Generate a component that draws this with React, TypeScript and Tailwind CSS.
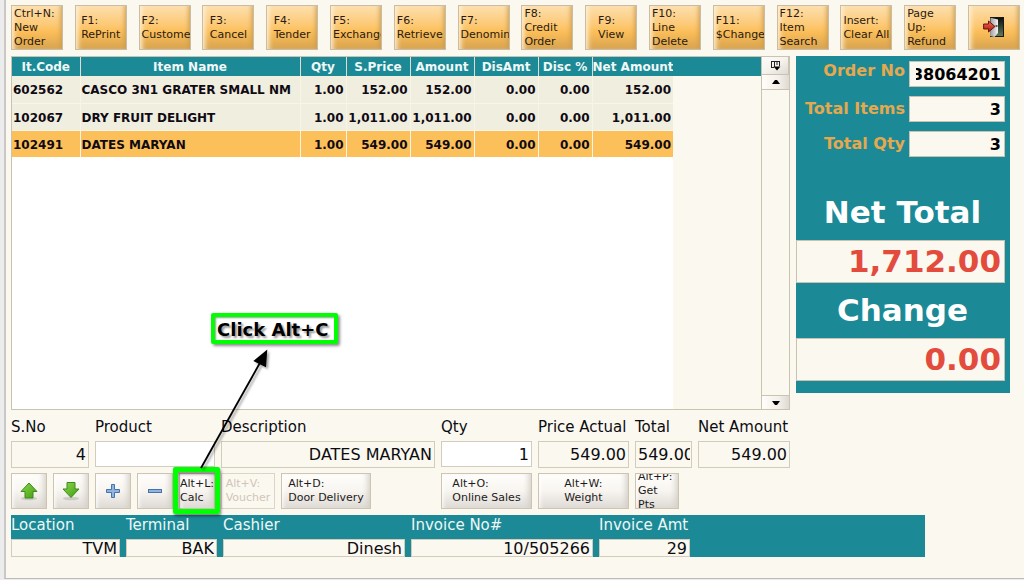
import React from "react";
import clsx from "clsx";

const orangeButton =
  "h-[45px] w-[52px] flex items-center justify-center overflow-hidden border border-[#c9bda6] px-0.5 text-[11px] leading-[14px] text-[#2b1a10] bg-[linear-gradient(to_bottom,#fddfae,#fcc873_45%,#fbbe59_60%,#d8a450)] shadow-[inset_5px_0_5px_-3px_#fff0d4,inset_-5px_0_5px_-4px_#c99a4c]";

const grayButton =
  "h-9 flex items-center justify-center overflow-hidden border border-[#cdc4b2] text-[11px] leading-[14px] text-[#1d1a20] bg-[linear-gradient(to_bottom,#fffefc,#f8f5f0_50%,#dedad5)] shadow-[inset_4px_0_4px_-3px_#ffffff,inset_-6px_0_6px_-4px_#d2cdc6]";

const functionKeys: string[][] = [
  ["Ctrl+N:", "New", "Order"],
  ["F1:", "RePrint"],
  ["F2:", "Customer"],
  ["F3:", "Cancel"],
  ["F4:", "Tender"],
  ["F5:", "Exchange"],
  ["F6:", "Retrieve"],
  ["F7:", "Denomin"],
  ["F8:", "Credit", "Order"],
  ["F9:", "View"],
  ["F10:", "Line", "Delete"],
  ["F11:", "$Change"],
  ["F12:", "Item", "Search"],
  ["Insert:", "Clear All"],
  ["Page", "Up:", "Refund"],
];

const columns = [
  { title: "It.Code", width: "w-[68px]" },
  { title: "Item Name", width: "w-[220px]" },
  { title: "Qty", width: "w-[46px]" },
  { title: "S.Price", width: "w-[64px]" },
  { title: "Amount", width: "w-[64px]" },
  { title: "DisAmt", width: "w-[64px]" },
  { title: "Disc %", width: "w-[54px]" },
  { title: "Net Amount", width: "w-[81px]" },
];

const items = [
  ["602562", "CASCO 3N1 GRATER SMALL NM", "1.00", "152.00", "152.00", "0.00", "0.00", "152.00"],
  ["102067", "DRY FRUIT DELIGHT", "1.00", "1,011.00", "1,011.00", "0.00", "0.00", "1,011.00"],
  ["102491", "DATES MARYAN", "1.00", "549.00", "549.00", "0.00", "0.00", "549.00"],
];

function Lines({ lines }: { lines: string[] }) {
  return (
    <span className={clsx("block max-w-full text-left whitespace-nowrap", lines.length > 2 && "w-full")}>
      {lines.map((line) => (
        <span key={line} className="block">
          {line}
        </span>
      ))}
    </span>
  );
}

function ExitIcon() {
  return (
    <svg width="22" height="22" viewBox="0 0 22 22" aria-hidden="true">
      <defs>
        <linearGradient id="doorway" x1="0" y1="0" x2="0" y2="1">
          <stop offset="0" stopColor="#0d0f0d" />
          <stop offset="1" stopColor="#5d7a5c" />
        </linearGradient>
        <linearGradient id="door" x1="0" y1="0" x2="1" y2="0">
          <stop offset="0" stopColor="#9a9a9a" />
          <stop offset="1" stopColor="#f4f4f4" />
        </linearGradient>
        <linearGradient id="exitArrow" x1="0" y1="0" x2="0" y2="1">
          <stop offset="0" stopColor="#f0705c" />
          <stop offset="1" stopColor="#b01208" />
        </linearGradient>
      </defs>
      <rect x="7" y="0" width="14" height="20" fill="#151815" />
      <rect x="8" y="1" width="12" height="18" fill="url(#doorway)" />
      <path d="M7.5 .8 L15 2.5 V16 L11.5 20 L7 19 Z" fill="url(#door)" />
      <path d="M12.5 9 h2" stroke="#222" strokeWidth="1.4" />
      <path d="M.6 7 H5.5 V4 L12 9.5 L5.5 15 V12 H.6 Z" fill="url(#exitArrow)" stroke="#5a0a05" strokeWidth=".9" />
    </svg>
  );
}

function GreenArrow({ down = false }: { down?: boolean }) {
  return (
    <svg width="18" height="20" viewBox="0 0 18 20" aria-hidden="true">
      <defs>
        <linearGradient id={down ? "greenDown" : "greenUp"} x1="0" y1="0" x2="1" y2="1">
          <stop offset="0" stopColor="#8fd850" />
          <stop offset="1" stopColor="#3f9c0c" />
        </linearGradient>
      </defs>
      <ellipse cx="9" cy="17.5" rx="8" ry="1.8" fill="#000" opacity=".13" />
      {down ? (
        <path d="M5 1.5 H13 V8 H17 L9 16.5 L1 8 H5 Z" fill="url(#greenDown)" stroke="#3d8a1c" strokeLinejoin="round" />
      ) : (
        <path d="M9 2 L17 10.5 H13 V17 H5 V10.5 H1 Z" fill="url(#greenUp)" stroke="#3d8a1c" strokeLinejoin="round" />
      )}
    </svg>
  );
}

function FieldBox({
  id,
  value,
  editable = false,
  className,
}: {
  id: string;
  value: string;
  editable?: boolean;
  className?: string;
}) {
  return (
    <input
      id={id}
      defaultValue={value}
      readOnly={!editable}
      className={clsx(
        "block w-full min-w-0 rounded-none border border-[#d3cbbb] text-right text-[16px] text-[#0c0c10] outline-none",
        editable ? "h-[26px] bg-white" : "h-[27px] bg-[#fbf8f0]",
        className ?? "px-0.5",
      )}
    />
  );
}

function SideField({ id, label, value, first = false }: { id: string; label: string; value: string; first?: boolean }) {
  return (
    <div className="flex items-center gap-1">
      <label
        htmlFor={id}
        className={clsx("flex-1 text-right text-[16px] leading-5 font-bold whitespace-nowrap text-[#e5a84f]", first && "self-start")}
      >
        {label}
      </label>
      <input
        id={id}
        readOnly
        dir="rtl"
        defaultValue={value}
        className="h-[26px] w-24 border border-[#c9c2b2] bg-[#fbf8f0] pr-[3px] pl-1.5 text-right text-[16px] font-bold text-black outline-none"
      />
    </div>
  );
}

const labelClass = "flex h-[31px] items-center pt-[3px] text-[15px] whitespace-nowrap text-[#0c0c10]";

const statusFields = [
  { id: "location", label: "Location", value: "TVM", width: "w-[109px]" },
  { id: "terminal", label: "Terminal", value: "BAK", width: "w-[91px]" },
  { id: "cashier", label: "Cashier", value: "Dinesh", width: "w-[182px]" },
  { id: "invoice-no", label: "Invoice No#", value: "10/505266", width: "w-[182px]" },
  { id: "invoice-amt", label: "Invoice Amt", value: "29", width: "w-[91px]" },
];

export default function App() {
  return (
    <div className="flex min-h-screen flex-col bg-[#ececec] pb-px pl-1 font-['DejaVu_Sans',sans-serif]">
      <div className="flex flex-1 flex-col border-b border-l-2 border-b-[#bdbbb8] border-l-[#c9c8c6] bg-[#fbf8f0] pb-[21px] pl-[5px]">
        <nav className="flex justify-between pt-[5px] pr-1">
          {functionKeys.map((lines) => (
            <button key={lines.join(" ")} type="button" className={orangeButton}>
              <Lines lines={lines} />
            </button>
          ))}
          <button type="button" aria-label="Exit" className={orangeButton}>
            <ExitIcon />
          </button>
        </nav>

        <main className="flex flex-1 items-stretch gap-1.5 pt-1.5 pr-3.5">
          <section className="flex min-w-0 flex-1 flex-col">
            <div className="flex flex-1 border border-[#cbc3b1]">
              <div className="w-[661px] shrink-0 bg-white">
                <table className="w-full table-fixed border-collapse text-[12px] font-bold">
                  <thead>
                    <tr className="h-[19px] bg-[#1b8a96] text-[#f0f8f6]">
                      {columns.map((column, index) => (
                        <th
                          key={column.title}
                          className={clsx(
                            column.width,
                            "p-0 text-center leading-[18px] whitespace-nowrap",
                            index > 0 && "border-l border-[#e4ddcd]",
                          )}
                        >
                          {column.title}
                        </th>
                      ))}
                    </tr>
                  </thead>
                  <tbody>
                    {items.map((row, rowIndex) => (
                      <tr
                        key={row[0]}
                        className={clsx("h-[27px] text-[#100a14]", rowIndex === 2 ? "bg-[#fcc05a]" : "border-b border-[#f8f5ea] bg-[#f0eedf]")}
                      >
                        {row.map((cell, index) => (
                          <td
                            key={index}
                            className={clsx(
                              "overflow-hidden p-0 pt-0.5 whitespace-nowrap",
                              index < 2 ? "pl-px text-left" : "pr-0.5 text-right",
                              index > 0 && "border-l border-[#f9f4e6]",
                            )}
                          >
                            {cell}
                          </td>
                        ))}
                      </tr>
                    ))}
                  </tbody>
                </table>
              </div>
              <div className="min-w-0 flex-1">
                <div className="h-[19px] bg-[#1b8a96]" />
              </div>
              <div className="flex w-7 flex-col border-l border-[#cbc3b1]">
                <button
                  type="button"
                  aria-label="Choose columns"
                  className="flex h-[18px] items-center justify-center border-r border-b border-[#cbc3b1] bg-[linear-gradient(to_bottom_right,#fffdfa,#f6f2ec_50%,#dedad3)]"
                >
                  <svg width="11" height="11" viewBox="0 0 11 11" aria-hidden="true">
                    <path d="M1.5 8 V1.5 H9.5 V6 M1 1.5 H10 M4.5 1.5 V7 M7 1.5 V5 M1 7.5 H4" fill="none" stroke="#222" />
                    <path d="M3.5 6.5 H10.5 L7 10.5 Z" fill="#000" />
                  </svg>
                </button>
                <button
                  type="button"
                  aria-label="Scroll up"
                  className="flex h-[15px] items-center justify-center border-b border-[#cbc3b1] bg-[linear-gradient(to_right,#fffdfa,#f4f0ea_60%,#dedad3)]"
                >
                  <svg width="8" height="4" viewBox="0 0 8 4" aria-hidden="true">
                    <path d="M0 4 L3 0 H5 L8 4 Z" fill="#000" />
                  </svg>
                </button>
                <div className="flex-1" />
                <button
                  type="button"
                  aria-label="Scroll down"
                  className="flex h-[14px] items-center justify-center border-t border-[#cbc3b1] bg-[linear-gradient(to_right,#fffdfa,#f4f0ea_60%,#dedad3)]"
                >
                  <svg width="8" height="4" viewBox="0 0 8 4" aria-hidden="true">
                    <path d="M0 0 H8 L5 4 H3 Z" fill="#000" />
                  </svg>
                </button>
              </div>
            </div>

            <form className="grid grid-cols-[78px_120px_minmax(0,1fr)_91px_91px_57px_92px] gap-x-1.5">
              <label htmlFor="sno" className={labelClass}>S.No</label>
              <label htmlFor="product" className={labelClass}>Product</label>
              <label htmlFor="description" className={labelClass}>Description</label>
              <label htmlFor="qty" className={labelClass}>Qty</label>
              <label htmlFor="price" className={labelClass}>Price Actual</label>
              <label htmlFor="total" className={labelClass}>Total</label>
              <label htmlFor="net" className={labelClass}>Net Amount</label>

              <FieldBox id="sno" value="4" />
              <FieldBox id="product" value="" editable />
              <FieldBox id="description" value="DATES MARYAN" />
              <FieldBox id="qty" value="1" editable />
              <FieldBox id="price" value="549.00" />
              <FieldBox id="total" value="549.00" className="pr-px pl-0.5" />
              <FieldBox id="net" value="549.00" />

              <div className="flex gap-1.5 pt-[5px]">
                <button type="button" aria-label="Move up" className={clsx(grayButton, "w-9")}>
                  <GreenArrow />
                </button>
                <button type="button" aria-label="Move down" className={clsx(grayButton, "w-9")}>
                  <GreenArrow down />
                </button>
              </div>
              <div className="flex gap-1.5 pt-[5px]">
                <button type="button" aria-label="Add" className={clsx(grayButton, "w-9")}>
                  <svg width="14" height="14" viewBox="0 0 14 14" aria-hidden="true">
                    <path d="M5.5 .5 H8.5 V5.5 H13.5 V8.5 H8.5 V13.5 H5.5 V8.5 H.5 V5.5 H5.5 Z" fill="#8fb4e0" stroke="#4673ae" />
                  </svg>
                </button>
                <button type="button" aria-label="Remove" className={clsx(grayButton, "w-9")}>
                  <svg width="14" height="4" viewBox="0 0 14 4" aria-hidden="true">
                    <rect x=".5" y=".5" width="13" height="3" fill="#8fb4e0" stroke="#4673ae" />
                  </svg>
                </button>
                <div className="relative w-9">
                  <button type="button" className={clsx(grayButton, "w-9")}>
                    <Lines lines={["Alt+L:", "Calc"]} />
                  </button>
                  <div className="pointer-events-none absolute -top-1.5 -left-1.5 z-10 h-[47px] w-[47px] rounded-xs border-5 border-[#00ff00] shadow-[1px_2px_3px_rgba(0,0,0,0.5),inset_1px_2px_3px_rgba(0,0,0,0.45)]" />
                  <svg
                    className="pointer-events-none absolute bottom-[39px] left-4 z-10 drop-shadow-[2px_2px_1px_rgba(0,0,0,0.35)]"
                    width="80"
                    height="125"
                    viewBox="195 345 80 125"
                    aria-hidden="true"
                  >
                    <path d="M201 468 L261 361" stroke="#000" strokeWidth="1.8" />
                    <path d="M267.3 349.5 L253.3 361 L266 367.3 Z" fill="#000" />
                  </svg>
                  <div className="pointer-events-none absolute bottom-[165px] left-8 z-10 flex h-[31px] w-[127px] items-center rounded-xs border-4 border-[#00ff00] bg-white pt-0.5 pl-0.5 text-[18px] font-bold whitespace-nowrap text-black shadow-[2px_2px_3px_rgba(0,0,0,0.45),inset_1px_1px_2px_rgba(0,0,0,0.4)] [text-shadow:2px_2px_2px_rgba(0,0,0,0.4)]">
                    Click Alt+C
                  </div>
                </div>
              </div>
              <div className="flex gap-1.5 pt-[5px]">
                <button
                  type="button"
                  disabled
                  className="flex h-9 w-[54px] items-center justify-center overflow-hidden border border-[#dcd5c7] bg-[#fbf8f0] text-[11px] leading-[14px] text-[#cfc6b8]"
                >
                  <Lines lines={["Alt+V:", "Voucher"]} />
                </button>
                <button type="button" className={clsx(grayButton, "w-[90px]")}>
                  <Lines lines={["Alt+D:", "Door Delivery"]} />
                </button>
              </div>
              <div className="pt-[5px]">
                <button type="button" className={clsx(grayButton, "w-full")}>
                  <Lines lines={["Alt+O:", "Online Sales"]} />
                </button>
              </div>
              <div className="pt-[5px]">
                <button type="button" className={clsx(grayButton, "w-full")}>
                  <Lines lines={["Alt+W:", "Weight"]} />
                </button>
              </div>
              <div className="pt-[5px]">
                <button type="button" className={clsx(grayButton, "w-11 px-0.5")}>
                  <Lines lines={["Alt+P:", "Get", "Pts"]} />
                </button>
              </div>
            </form>
          </section>

          <aside className="w-[214px] shrink-0 self-start bg-[#1b8a96] pt-[5px] pr-[5px] pb-3">
            <div className="flex flex-col gap-[9px]">
              <SideField id="order-no" label="Order No" value="38064201" first />
              <SideField id="total-items" label="Total Items" value="3" />
              <SideField id="total-qty" label="Total Qty" value="3" />
            </div>
            <label htmlFor="net-total" className="mt-7 flex h-[55px] items-center justify-center pl-1 text-[31px] font-bold text-white">
              Net Total
            </label>
            <input
              id="net-total"
              readOnly
              defaultValue="1,712.00"
              className="block h-[43px] w-full border border-[#c9c2b2] bg-[#fbf8f0] pr-[3px] text-right text-[31px] font-bold text-[#e34b3d] outline-none"
            />
            <label htmlFor="change" className="flex h-[55px] items-center justify-center pl-1 text-[31px] font-bold text-white">
              Change
            </label>
            <input
              id="change"
              readOnly
              defaultValue="0.00"
              className="block h-[43px] w-full border border-[#c9c2b2] bg-[#fbf8f0] pr-[3px] text-right text-[31px] font-bold text-[#e34b3d] outline-none"
            />
          </aside>
        </main>

        <footer className="mt-1.5 mr-[99px] flex gap-1.5 bg-[#1b8a96]">
          {statusFields.map((field) => (
            <div key={field.id} className={field.width}>
              <label htmlFor={field.id} className="flex h-6 items-center pb-1 text-[15px] leading-5 whitespace-nowrap text-[#eef7f6]">
                {field.label}
              </label>
              <input
                id={field.id}
                readOnly
                defaultValue={field.value}
                className="block h-[18px] w-full border border-[#d3cbbb] bg-[#fbf8f0] pr-0.5 text-right text-[16px] leading-4 text-[#0c0c10] outline-none"
              />
            </div>
          ))}
        </footer>
      </div>
    </div>
  );
}
